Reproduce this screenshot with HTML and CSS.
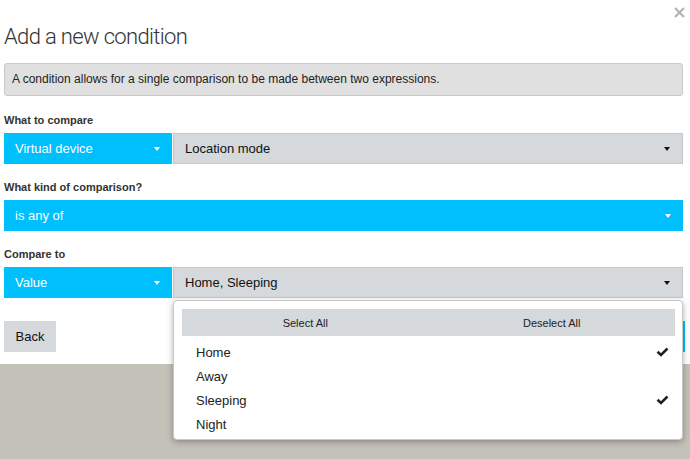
FILE: index.html
```html
<!DOCTYPE html>
<html lang="en">
<head>
<meta charset="utf-8">
<title>Add a new condition</title>
<link rel="stylesheet" href="styles.css">
</head>
<body>
<div class="modal">
  <button class="close" aria-label="Close">
    <svg width="11" height="11" viewBox="0 0 11 11"><path d="M1 1 L10 10 M10 1 L1 10" stroke="#b3b3b3" stroke-width="2.2" fill="none"/></svg>
  </button>
  <h1 class="title">Add a new condition</h1>
  <div class="info">A condition allows for a single comparison to be made between two expressions.</div>

  <div class="group group-first">
    <div class="label">What to compare</div>
    <div class="row">
      <div class="sel sel-blue sel-left"><span>Virtual device</span><i class="caret caret-white"></i></div>
      <div class="sel sel-gray"><span>Location mode</span><i class="caret"></i></div>
    </div>
  </div>

  <div class="group">
    <div class="label">What kind of comparison?</div>
    <div class="row">
      <div class="sel sel-blue sel-full"><span>is any of</span><i class="caret caret-white"></i></div>
    </div>
  </div>

  <div class="group">
    <div class="label">Compare to</div>
    <div class="row">
      <div class="sel sel-blue sel-left"><span>Value</span><i class="caret caret-white"></i></div>
      <div class="sel sel-gray sel-anchor"><span>Home, Sleeping</span><i class="caret"></i>
        <div class="menu">
          <div class="menu-head">
            <span>Select All</span>
            <span>Deselect All</span>
          </div>
          <ul class="menu-list">
            <li><span>Home</span><svg class="check" width="13" height="10" viewBox="0 0 13 10"><path d="M1.5 4.8 L5 8 L11.5 1.5" stroke="#222" stroke-width="2.6" fill="none"/></svg></li>
            <li><span>Away</span></li>
            <li><span>Sleeping</span><svg class="check" width="13" height="10" viewBox="0 0 13 10"><path d="M1.5 4.8 L5 8 L11.5 1.5" stroke="#222" stroke-width="2.6" fill="none"/></svg></li>
            <li><span>Night</span></li>
          </ul>
        </div>
      </div>
    </div>
  </div>

  <div class="footer">
    <button class="btn btn-back">Back</button>
    <button class="btn btn-save">Save</button>
  </div>
</div>
<div class="backdrop"></div>
</body>
</html>
```

FILE: styles.css
```css
html {
  background: #c4c1b9;
}
body {
  margin: 0;
  min-height: 100vh;
  display: flex;
  flex-direction: column;
  font-family: "Liberation Sans", Arial, sans-serif;
  color: #222;
}
.modal {
  position: relative;
  z-index: 2;
  background: #fff;
  padding: 0 7px 12px 4px;
}
.backdrop {
  flex: 1;
  background: #c4c1b9;
}
.close {
  position: absolute;
  top: 7px;
  right: 5px;
  border: 0;
  padding: 0;
  background: none;
  width: 11px;
  height: 11px;
  display: flex;
}
.title {
  margin: 0;
  padding-top: 24px;
  font-family: Roboto, "Liberation Sans", sans-serif;
  font-weight: 300;
  font-size: 22px;
  line-height: 26px;
  letter-spacing: -0.65px;
  color: #333;
}
.info {
  margin-top: 13px;
  background: #e0e0e0;
  border: 1px solid #c9c9c9;
  border-radius: 3px;
  padding: 7px;
  font-size: 12px;
  line-height: 17px;
  color: #222;
}
.group {
  margin-top: 16px;
}
.group-first {
  margin-top: 17px;
}
.label {
  font-size: 11px;
  font-weight: bold;
  line-height: 15px;
  color: #333;
  margin-bottom: 5px;
}
.row {
  display: flex;
  height: 31px;
}
.sel {
  display: flex;
  align-items: center;
  justify-content: space-between;
  box-sizing: border-box;
  height: 31px;
  font-size: 13px;
}
.sel-blue {
  background: #00bffd;
  color: #fff;
  padding: 0 12px 0 11px;
}
.sel-left {
  width: 168px;
  margin-right: 1px;
}
.sel-full {
  flex: 1;
}
.sel-gray {
  flex: 1;
  background: #d5d9db;
  border: 1px solid #c3c7c9;
  color: #111;
  padding: 0 12px 0 11px;
}
.sel-anchor {
  position: relative;
}
.caret {
  width: 0;
  height: 0;
  border-left: 3.5px solid transparent;
  border-right: 3.5px solid transparent;
  border-top: 4px solid #111;
}
.caret-white {
  border-top-color: #fff;
}
.menu {
  position: absolute;
  top: calc(100% + 3px);
  left: -1px;
  right: -1px;
  background: #fff;
  border: 1px solid #c8c8c8;
  border-radius: 4px;
  box-shadow: 0 2px 6px rgba(0, 0, 0, 0.3);
  padding: 8px 7px 3px 8px;
  z-index: 5;
}
.menu-head {
  display: grid;
  grid-template-columns: 1fr 1fr;
  height: 27px;
  background: #d5d9db;
  font-size: 11px;
  color: #222;
}
.menu-head span {
  display: flex;
  align-items: center;
  justify-content: center;
}
.menu-list {
  list-style: none;
  margin: 4px 0 0;
  padding: 0;
}
.menu-list li {
  display: flex;
  align-items: center;
  justify-content: space-between;
  height: 24px;
  padding: 0 6px 0 14px;
  font-size: 13px;
  color: #222;
}
.footer {
  display: flex;
  justify-content: space-between;
  margin-top: 23px;
  margin-right: -2px;
}
.btn {
  height: 31px;
  border: 0;
  font-family: "Liberation Sans", Arial, sans-serif;
  font-size: 13px;
  padding: 0 11.5px;
  color: #111;
}
.btn-back {
  background: #d5d9db;
}
.btn-save {
  background: #00bffd;
  color: #fff;
  width: 70px;
}
```
